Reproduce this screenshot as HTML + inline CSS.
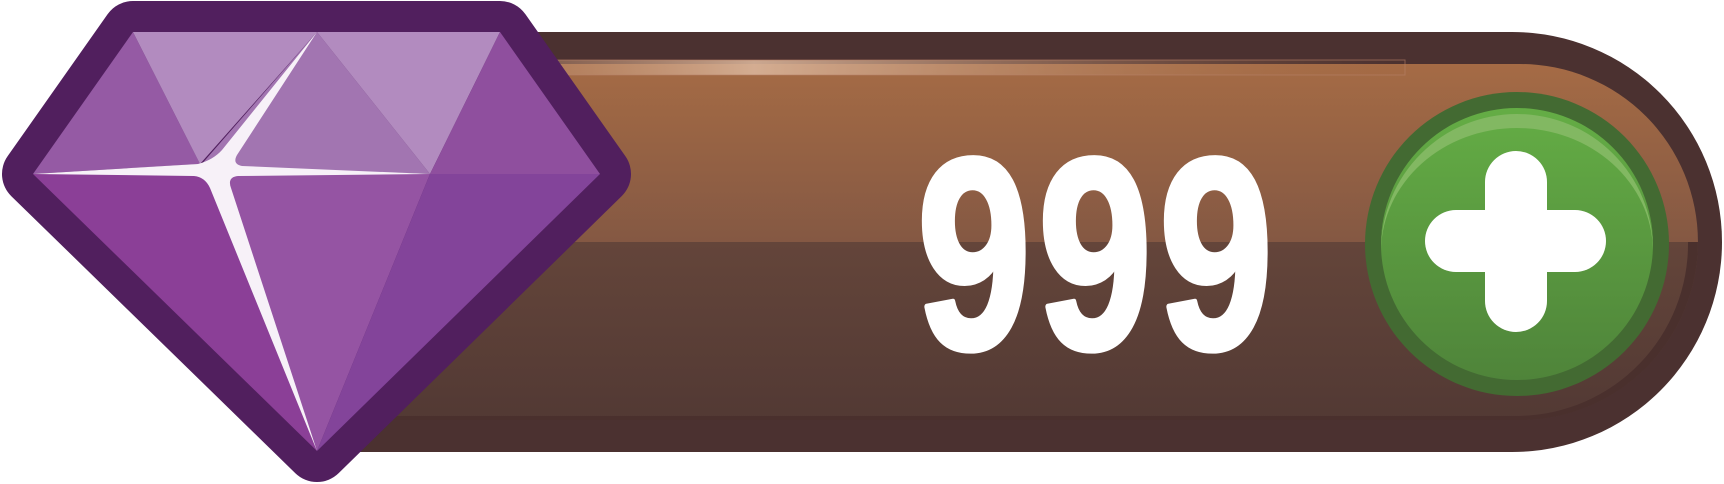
<!DOCTYPE html>
<html><head><meta charset="utf-8"><style>html,body{margin:0;padding:0;background:#fff}svg{display:block}</style></head>
<body>
<svg width="1724" height="484" viewBox="0 0 1724 484" xmlns="http://www.w3.org/2000/svg">
<defs>
<linearGradient id="top" x1="0" y1="0" x2="0" y2="1"><stop offset="0" stop-color="#a56b45"/><stop offset="1" stop-color="#845843"/></linearGradient>
<linearGradient id="bot" x1="0" y1="0" x2="0" y2="1"><stop offset="0" stop-color="#64453a"/><stop offset="1" stop-color="#523934"/></linearGradient>
<linearGradient id="grn" x1="0" y1="0" x2="0" y2="1"><stop offset="0" stop-color="#64ad45"/><stop offset="1" stop-color="#4f843a"/></linearGradient>
<linearGradient id="shine" x1="0" y1="0" x2="1" y2="0"><stop offset="0" stop-color="#a56b45" stop-opacity="0"/><stop offset="0.4" stop-color="#d9b49a"/><stop offset="1" stop-color="#a56b45" stop-opacity="0"/></linearGradient>
<clipPath id="inner"><path d="M300 64 H1520 A178 178 0 0 1 1520 420 H300 Z"/></clipPath>
</defs>
<path d="M300 32 H1512 A210 210 0 0 1 1512 452 H300 Z" fill="#4b3130"/>
<g clip-path="url(#inner)">
<rect x="300" y="64" width="1480" height="180" fill="url(#top)"/>
<rect x="300" y="242" width="1480" height="180" fill="url(#bot)"/>
<path d="M1688 242 A172 172 0 0 1 1520 416 H300 V422 H1800 V242 Z" fill="#4a302d"/>
</g>
<rect x="320" y="60" width="1085" height="15" fill="url(#shine)" opacity="0.9"/>
<rect x="320" y="60" width="1085" height="15" fill="none" stroke="#b58068" stroke-width="1" opacity="0.6"/>
<g fill="#fff" stroke="#fff" stroke-width="6" stroke-linejoin="round" font-family="'Liberation Sans', sans-serif" font-weight="bold" font-size="272">
<text x="917" y="348" textLength="114" lengthAdjust="spacingAndGlyphs">9</text>
<text x="1038" y="348" textLength="114" lengthAdjust="spacingAndGlyphs">9</text>
<text x="1159" y="348" textLength="114" lengthAdjust="spacingAndGlyphs">9</text>
</g>
<circle cx="1517" cy="244" r="152" fill="#436a32"/>
<circle cx="1517" cy="244" r="136" fill="url(#grn)"/>
<path d="M1381 250 A136 136 0 0 1 1653 250 A136 124 0 0 0 1517 128 A136 124 0 0 0 1381 250Z" fill="#82b862"/>
<rect x="1485" y="151" width="62" height="181" rx="31" fill="#fff"/>
<rect x="1425" y="210" width="181" height="62" rx="31" fill="#fff"/>
<polygon points="133,32 500,32 600,174 317,451 33,174" fill="#511f5e" stroke="#511f5e" stroke-width="62" stroke-linejoin="round"/>
<polygon points="133,32 33,174 200,164" fill="#955aa4"/>
<polygon points="133,32 317,32 200,164" fill="#b28bbf"/>
<polygon points="317,32 200,166 430,174" fill="#a275b1"/>
<polygon points="317,32 500,32 430,174" fill="#b28bbf"/>
<polygon points="500,32 600,174 430,174" fill="#8f4f9e"/>
<polygon points="33,174 215,174 317,451" fill="#8b3f97"/>
<polygon points="215,174 430,174 317,451" fill="#9554a3"/>
<polygon points="430,174 600,174 317,451" fill="#83449a"/>
<path d="M33 174 L198 164 Q213 160 222 150 L317 32 L237 155 Q232 164 242 166 L430 174 L238 176 Q227 177 231 188 L317 451 L210 188 Q205 177 194 176 Z" fill="#f7f1f8"/>
</svg>
</body></html>
